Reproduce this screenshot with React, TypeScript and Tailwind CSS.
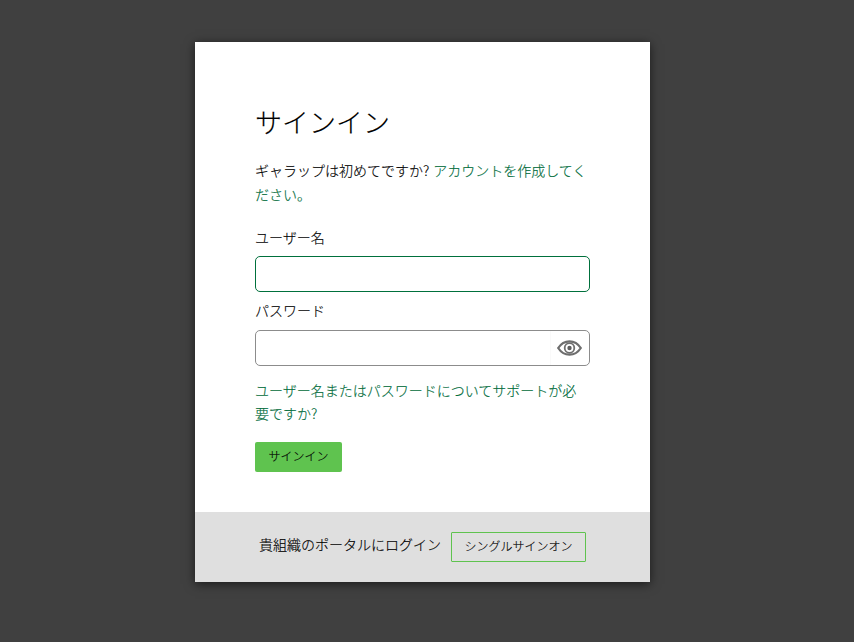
import React, {useState} from 'react'

const jpFont = "font-['Liberation_Sans','Noto_Sans_CJK_JP',sans-serif]"
const thinMark = "font-['Noto_Sans_CJK_JP',sans-serif]"

const EyeIcon = () => (
    <svg width="25" height="16" viewBox="0 0 25 16" fill="none">
        <path d="M1.2 8C4 3.6 8 1.3 12.5 1.3S21 3.6 23.8 8C21 12.4 17 14.7 12.5 14.7S4 12.4 1.2 8Z" stroke="#6e6e6e" strokeWidth="2.2"/>
        <circle cx="12.5" cy="8" r="4.8" stroke="#6e6e6e" strokeWidth="1.8"/>
        <circle cx="12.5" cy="8" r="2.2" fill="#5e5e5e"/>
    </svg>
)

const App = () => {
    const [username, setUsername] = useState('')
    const [password, setPassword] = useState('')

    return (
        <div className={`flex h-[642px] w-full items-start justify-center bg-[#404040] pt-[42px] pr-[9px] text-[14px] font-light text-black [-webkit-text-stroke:0.15px] ${jpFont}`}>
            <div className="flex h-[540px] w-[455px] flex-col bg-white shadow-[0_2px_10px_rgba(0,0,0,0.6)]">
                <div className="flex flex-1 flex-col px-[60px] pt-[60px]">
                    <h1 className="mt-[2px] h-[40px] text-[27px] leading-[40px] font-light">サインイン</h1>
                    <p className="mt-[14px] h-[48px] text-[14px] leading-[24px]">
                        ギャラップは初めてですか<span className={thinMark}>?</span> <a href="#" className="text-[#006b3a]">アカウントを作成してください。</a>
                    </p>
                    <label className="mt-[20px] text-[14px] leading-[24px]">ユーザー名</label>
                    <input
                        value={username}
                        onChange={(e) => setUsername(e.target.value)}
                        className="mt-[6px] h-[36px] w-full rounded-[5px] border border-[#00703c] px-2 outline-none"
                    />
                    <label className="mt-[7px] text-[14px] leading-[24px]">パスワード</label>
                    <div className="relative mt-[7px] h-[36px] w-full">
                        <input
                            type="password"
                            value={password}
                            onChange={(e) => setPassword(e.target.value)}
                            className="h-full w-full rounded-[5px] border border-[#8c8c8c] px-2 pr-10 outline-none"
                        />
                        <span className="absolute top-[1px] right-[1px] bottom-[1px] flex w-[39px] items-center justify-center border-l border-[#fafafa] pr-[2px]">
                            <EyeIcon/>
                        </span>
                    </div>
                    <a href="#" className="mt-[14px] h-[46px] text-[14px] leading-[23px] text-[#006b3a]">
                        ユーザー名またはパスワードについてサポートが必要ですか<span className={`${thinMark} leading-[0]`}>?</span>
                    </a>
                    <button className="mt-[16px] h-[30px] w-[87px] rounded-[2px] bg-[#5fc34f] text-[12px] text-black">
                        サインイン
                    </button>
                </div>
                <div className="flex h-[70px] items-center justify-center gap-[10px] bg-[#dfdfdf]">
                    <span className="mb-[3px] text-[14px]">貴組織のポータルにログイン</span>
                    <button className="h-[30px] w-[135px] rounded-[1px] border border-[#5fc34f] text-[12px] text-black">
                        シングルサインオン
                    </button>
                </div>
            </div>
        </div>
    )
}

export default App
